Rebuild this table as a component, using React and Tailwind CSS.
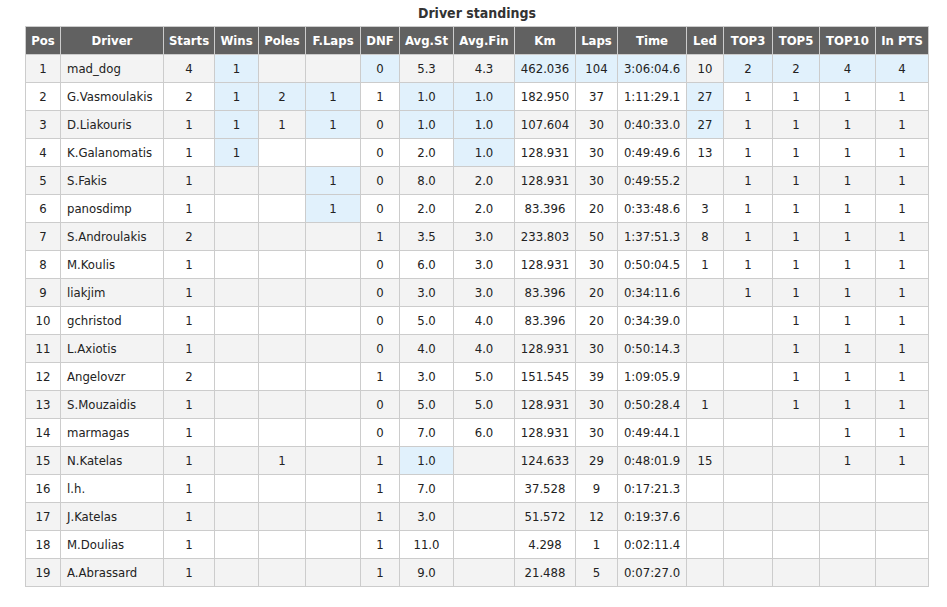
import React from 'react';

const COLS = [
  { label: 'Pos', w: 35 },
  { label: 'Driver', w: 103 },
  { label: 'Starts', w: 51 },
  { label: 'Wins', w: 44 },
  { label: 'Poles', w: 47 },
  { label: 'F.Laps', w: 55 },
  { label: 'DNF', w: 39 },
  { label: 'Avg.St', w: 54 },
  { label: 'Avg.Fin', w: 61 },
  { label: 'Km', w: 61 },
  { label: 'Laps', w: 42 },
  { label: 'Time', w: 69 },
  { label: 'Led', w: 37 },
  { label: 'TOP3', w: 49 },
  { label: 'TOP5', w: 47 },
  { label: 'TOP10', w: 56 },
  { label: 'In PTS', w: 53 },
];

const ROWS = [
  ['1', 'mad_dog', '4', '1', '', '', '0', '5.3', '4.3', '462.036', '104', '3:06:04.6', '10', '2', '2', '4', '4'],
  ['2', 'G.Vasmoulakis', '2', '1', '2', '1', '1', '1.0', '1.0', '182.950', '37', '1:11:29.1', '27', '1', '1', '1', '1'],
  ['3', 'D.Liakouris', '1', '1', '1', '1', '0', '1.0', '1.0', '107.604', '30', '0:40:33.0', '27', '1', '1', '1', '1'],
  ['4', 'K.Galanomatis', '1', '1', '', '', '0', '2.0', '1.0', '128.931', '30', '0:49:49.6', '13', '1', '1', '1', '1'],
  ['5', 'S.Fakis', '1', '', '', '1', '0', '8.0', '2.0', '128.931', '30', '0:49:55.2', '', '1', '1', '1', '1'],
  ['6', 'panosdimp', '1', '', '', '1', '0', '2.0', '2.0', '83.396', '20', '0:33:48.6', '3', '1', '1', '1', '1'],
  ['7', 'S.Androulakis', '2', '', '', '', '1', '3.5', '3.0', '233.803', '50', '1:37:51.3', '8', '1', '1', '1', '1'],
  ['8', 'M.Koulis', '1', '', '', '', '0', '6.0', '3.0', '128.931', '30', '0:50:04.5', '1', '1', '1', '1', '1'],
  ['9', 'liakjim', '1', '', '', '', '0', '3.0', '3.0', '83.396', '20', '0:34:11.6', '', '1', '1', '1', '1'],
  ['10', 'gchristod', '1', '', '', '', '0', '5.0', '4.0', '83.396', '20', '0:34:39.0', '', '', '1', '1', '1'],
  ['11', 'L.Axiotis', '1', '', '', '', '0', '4.0', '4.0', '128.931', '30', '0:50:14.3', '', '', '1', '1', '1'],
  ['12', 'Angelovzr', '2', '', '', '', '1', '3.0', '5.0', '151.545', '39', '1:09:05.9', '', '', '1', '1', '1'],
  ['13', 'S.Mouzaidis', '1', '', '', '', '0', '5.0', '5.0', '128.931', '30', '0:50:28.4', '1', '', '1', '1', '1'],
  ['14', 'marmagas', '1', '', '', '', '0', '7.0', '6.0', '128.931', '30', '0:49:44.1', '', '', '', '1', '1'],
  ['15', 'N.Katelas', '1', '', '1', '', '1', '1.0', '', '124.633', '29', '0:48:01.9', '15', '', '', '1', '1'],
  ['16', 'l.h.', '1', '', '', '', '1', '7.0', '', '37.528', '9', '0:17:21.3', '', '', '', '', ''],
  ['17', 'J.Katelas', '1', '', '', '', '1', '3.0', '', '51.572', '12', '0:19:37.6', '', '', '', '', ''],
  ['18', 'M.Doulias', '1', '', '', '', '1', '11.0', '', '4.298', '1', '0:02:11.4', '', '', '', '', ''],
  ['19', 'A.Abrassard', '1', '', '', '', '1', '9.0', '', '21.488', '5', '0:07:27.0', '', '', '', '', ''],
];

// best values per column (row index -> column indexes)
const BEST = {
  0: [3, 6, 9, 10, 11, 13, 14, 15, 16],
  1: [3, 4, 5, 7, 8, 12],
  2: [3, 5, 7, 8, 12],
  3: [3, 8],
  4: [5],
  5: [5],
  14: [7],
};

export default function App() {
  return (
    <div
      className="min-h-screen bg-white pt-[5px] pl-[25px] text-[#222]"
      style={{ fontFamily: "Tahoma, 'DejaVu Sans Condensed', 'DejaVu Sans', sans-serif" }}
    >
      <div className="w-[904px] text-center text-[14px] font-bold leading-[16px] text-[#333] mb-[5px]">
        Driver standings
      </div>
      <table className="table-fixed border-collapse text-[13px] w-[904px]">
        <colgroup>
          {COLS.map(c => (
            <col key={c.label} style={{ width: c.w }} />
          ))}
        </colgroup>
        <thead>
          <tr className="h-[28px] bg-[#616161] text-white">
            {COLS.map(c => (
              <th key={c.label} className="border border-[#cccccc] px-0 font-bold text-center whitespace-nowrap">
                {c.label}
              </th>
            ))}
          </tr>
        </thead>
        <tbody>
          {ROWS.map((row, ri) => (
            <tr key={ri} className={`h-[28px] ${ri % 2 === 0 ? 'bg-[#f3f3f3]' : 'bg-white'}`}>
              {row.map((v, ci) => {
                const best = (BEST[ri] || []).includes(ci);
                return (
                  <td
                    key={ci}
                    className={`border border-[#cccccc] whitespace-nowrap ${
                      ci === 1 ? 'text-left pl-[6px]' : 'text-center'
                    } ${best ? 'bg-[#e1f1fc]' : ''}`}
                  >
                    {v}
                  </td>
                );
              })}
            </tr>
          ))}
        </tbody>
      </table>
    </div>
  );
}
